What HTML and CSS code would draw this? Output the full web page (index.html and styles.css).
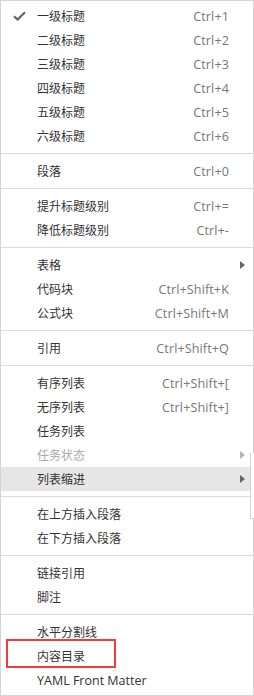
FILE: index.html
```html
<!DOCTYPE html>
<html lang="zh-CN">

<head>
    <meta charset="UTF-8">
    <meta name="viewport" content="width=device-width, initial-scale=1.0">
    <title>段落菜单</title>
    <link rel="stylesheet" href="styles.css">
</head>

<body>
    <div class="menu">
        <div class="item">
            <span class="check">
                <svg width="13" height="10" viewBox="0 0 13 10"><path d="M1 5.2 L4.6 8.6 L12 1.2" fill="none" stroke="#666" stroke-width="2.2"/></svg>
            </span>
            <span class="label">一级标题</span><span class="key">Ctrl+1</span>
        </div>
        <div class="item"><span class="check"></span><span class="label">二级标题</span><span class="key">Ctrl+2</span></div>
        <div class="item"><span class="check"></span><span class="label">三级标题</span><span class="key">Ctrl+3</span></div>
        <div class="item"><span class="check"></span><span class="label">四级标题</span><span class="key">Ctrl+4</span></div>
        <div class="item"><span class="check"></span><span class="label">五级标题</span><span class="key">Ctrl+5</span></div>
        <div class="item"><span class="check"></span><span class="label">六级标题</span><span class="key">Ctrl+6</span></div>
        <div class="sep"></div>
        <div class="item"><span class="check"></span><span class="label">段落</span><span class="key">Ctrl+0</span></div>
        <div class="sep"></div>
        <div class="item"><span class="check"></span><span class="label">提升标题级别</span><span class="key">Ctrl+=</span></div>
        <div class="item"><span class="check"></span><span class="label">降低标题级别</span><span class="key">Ctrl+-</span></div>
        <div class="sep"></div>
        <div class="item"><span class="check"></span><span class="label">表格</span><span class="key"></span><span class="arrow"></span></div>
        <div class="item"><span class="check"></span><span class="label">代码块</span><span class="key">Ctrl+Shift+K</span></div>
        <div class="item"><span class="check"></span><span class="label">公式块</span><span class="key">Ctrl+Shift+M</span></div>
        <div class="sep"></div>
        <div class="item"><span class="check"></span><span class="label">引用</span><span class="key">Ctrl+Shift+Q</span></div>
        <div class="sep"></div>
        <div class="item"><span class="check"></span><span class="label">有序列表</span><span class="key">Ctrl+Shift+[</span></div>
        <div class="item"><span class="check"></span><span class="label">无序列表</span><span class="key">Ctrl+Shift+]</span></div>
        <div class="item"><span class="check"></span><span class="label">任务列表</span></div>
        <div class="item disabled"><span class="check"></span><span class="label">任务状态</span><span class="key"></span><span class="arrow"></span></div>
        <div class="item active"><span class="check"></span><span class="label">列表缩进</span><span class="key"></span><span class="arrow"></span></div>
        <div class="sep"></div>
        <div class="item"><span class="check"></span><span class="label">在上方插入段落</span></div>
        <div class="item"><span class="check"></span><span class="label">在下方插入段落</span></div>
        <div class="sep"></div>
        <div class="item"><span class="check"></span><span class="label">链接引用</span></div>
        <div class="item"><span class="check"></span><span class="label">脚注</span></div>
        <div class="sep"></div>
        <div class="item"><span class="check"></span><span class="label">水平分割线</span></div>
        <div class="item"><span class="check"></span><span class="label">内容目录</span></div>
        <div class="item"><span class="check"></span><span class="label latin">YAML Front Matter</span></div>

        <!-- edge of the opened submenu and the red mark drawn over the shot -->
        <div class="submenuEdge"></div>
        <div class="mark"></div>
    </div>
</body>

</html>
```

FILE: styles.css
```css
* {
    margin: 0;
    padding: 0;
    box-sizing: border-box;
}

body {
    background: white;
    overflow: hidden;
}

.menu {
    position: relative;
    width: 254px;
    height: 696px;
    padding: 3px 0;
    border: 1px solid #d4d4d4;
    background: white;
    font-family: 'Open Sans', 'Noto Sans CJK SC', sans-serif;
    font-size: 12px;
    color: #333;
}

.item {
    display: grid;
    grid-template-columns: 36px 1fr auto 24px;
    align-items: center;
    height: 24px;
}

.check {
    display: flex;
    justify-content: center;
    padding-left: 1px;
}

.key {
    color: #777;
    font-size: 12.6px;
    letter-spacing: 0.1px;
}

.latin {
    font-size: 12.5px;
}

.arrow {
    width: 0;
    height: 0;
    margin-left: 11px;
    border-top: 4px solid transparent;
    border-bottom: 4px solid transparent;
    border-left: 5px solid #666;
}

.disabled {
    color: #aaa;
}

.disabled .arrow {
    border-left-color: #b4b4b4;
}

.active {
    background: #e6e6e6;
}

.sep {
    height: 1px;
    margin: 5px 0;
    background: #dadada;
}

.submenuEdge {
    position: absolute;
    left: 249px;
    top: 452px;
    width: 4px;
    height: 66px;
    background: white;
    border-left: 1px solid #d4d4d4;
    border-bottom: 1px solid #d4d4d4;
}

.mark {
    position: absolute;
    left: 5px;
    top: 638px;
    width: 110px;
    height: 29px;
    border: 2px solid #f43b3b;
}
```
